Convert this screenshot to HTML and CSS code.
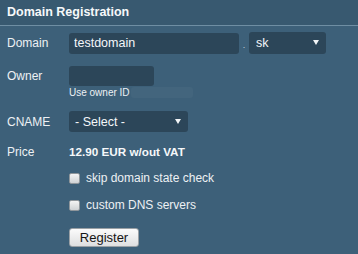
FILE: index.html
```html
<!DOCTYPE html>
<html lang="en">
<head>
    <meta charset="UTF-8">
    <title>Domain Registration</title>
    <link rel="stylesheet" href="styles.css">
</head>
<body>
    <div class="panel">
        <h2 class="panel-title">Domain Registration</h2>
        <form class="reg-form">
            <div class="row row-domain">
                <label class="label" for="domain">Domain</label>
                <input class="field field-domain" id="domain" type="text" value="testdomain">
                <span class="dot">.</span>
                <span class="select select-tld">
                    <select>
                        <option>sk</option>
                    </select>
                </span>
            </div>
            <div class="row row-owner">
                <label class="label" for="owner">Owner</label>
                <div class="owner-box">
                    <input class="field field-owner" id="owner" type="text">
                    <div class="note">Use owner ID<span class="note-hint"></span></div>
                </div>
            </div>
            <div class="row row-cname">
                <label class="label" for="cname">CNAME</label>
                <span class="select select-cname">
                    <select id="cname">
                        <option>- Select -</option>
                    </select>
                </span>
            </div>
            <div class="row row-price">
                <span class="label">Price</span>
                <strong class="price">12.90 EUR w/out VAT</strong>
            </div>
            <label class="row indent check check-first">
                <input type="checkbox">
                <span>skip domain state check</span>
            </label>
            <label class="row indent check">
                <input type="checkbox">
                <span>custom DNS servers</span>
            </label>
            <div class="row indent row-submit">
                <button type="button" class="btn">Register</button>
            </div>
        </form>
    </div>
</body>
</html>
```

FILE: styles.css
```css
body {
    margin: 0;
    background: #3d6079;
    color: #edf1f4;
    font-family: 'Liberation Sans', Arial, sans-serif;
    font-size: 12px;
}

.panel-title {
    margin: 0;
    height: 25px;
    padding-left: 7px;
    line-height: 25px;
    font-size: 12.5px;
    font-weight: bold;
    color: #f6f8fa;
    background: #385970;
    border-bottom: 1px solid #6f8ea3;
}

.reg-form {
    padding: 6px 0 0 7px;
}

.row {
    display: flex;
    align-items: center;
}

.label {
    width: 62px;
    flex: none;
}

.indent {
    padding-left: 62px;
}

.field {
    box-sizing: border-box;
    height: 21px;
    margin: 0;
    padding: 0 5px;
    border: none;
    border-radius: 3px;
    background: #2c4659;
    color: #f4f7f9;
    font-family: inherit;
    font-size: 12.5px;
    outline: none;
}

.field-domain {
    width: 170px;
}

.dot {
    width: 10px;
    text-align: center;
    font-size: 9px;
    padding-top: 4px;
    color: #c7d3dc;
}

.select {
    position: relative;
    display: inline-block;
}

.select select {
    appearance: none;
    -webkit-appearance: none;
    box-sizing: border-box;
    height: 21px;
    margin: 0;
    padding: 0 6px;
    border: none;
    border-radius: 3px;
    background: #2c4659;
    color: #f4f7f9;
    font-family: inherit;
    font-size: 12.5px;
    outline: none;
}

.select::after {
    content: "";
    position: absolute;
    right: 7px;
    top: 8px;
    border-left: 3px solid transparent;
    border-right: 3px solid transparent;
    border-top: 5px solid #f2f5f7;
    pointer-events: none;
}

.select-tld select {
    width: 77px;
    height: 22px;
    padding-left: 7px;
}

.select-cname select {
    width: 119px;
}

.row-owner {
    margin-top: 12px;
    align-items: flex-start;
}

.row-owner .label {
    line-height: 20px;
}

.field-owner {
    width: 85px;
    height: 20px;
}

.note {
    display: flex;
    margin-top: 1px;
    font-size: 10px;
    line-height: 11px;
}

.note-hint {
    width: 62px;
    margin-left: 1px;
    border-radius: 3px;
    background: rgba(255, 255, 255, 0.03);
}

.row-cname {
    margin-top: 13px;
}

.row-price {
    margin-top: 12px;
    line-height: 16px;
}

.price {
    font-size: 11.7px;
    color: #f6f8fa;
}

.check {
    margin-top: 10px;
    height: 16px;
}

.check + .check {
    margin-top: 11px;
}

.check input {
    appearance: none;
    -webkit-appearance: none;
    box-sizing: border-box;
    width: 11px;
    height: 11px;
    margin: 0 6px 0 0;
    border: 1px solid #8f969b;
    border-radius: 2px;
    background: linear-gradient(#f4f4f4, #cfd2d4);
}

.row-submit {
    margin-top: 15px;
}

.btn {
    box-sizing: border-box;
    width: 70px;
    height: 19px;
    padding: 0;
    border: 1px solid #9aa0a5;
    border-radius: 3px;
    background: linear-gradient(#fbfbfb, #dedfe0);
    color: #151515;
    font-family: inherit;
    font-size: 13px;
    line-height: 17px;
}
```
